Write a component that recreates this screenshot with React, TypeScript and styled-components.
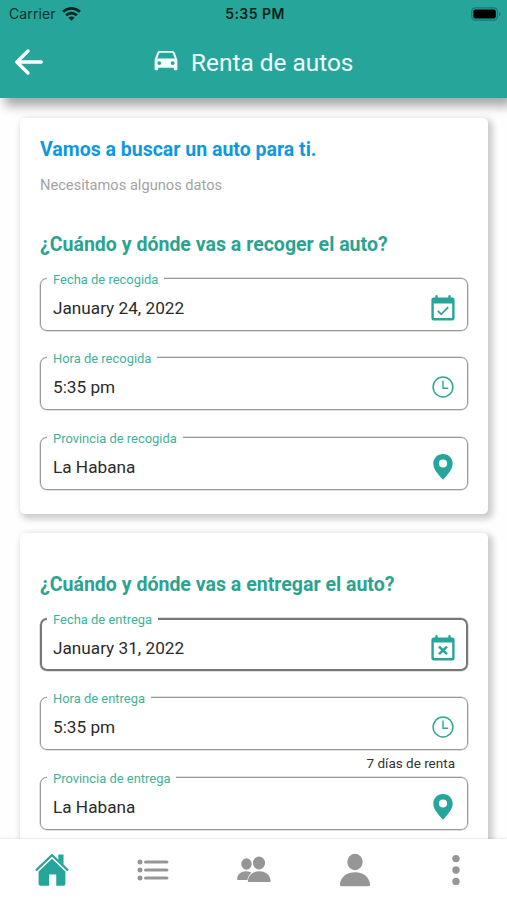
import React from "react";
import styled, { createGlobalStyle } from "styled-components";

const teal = "#26a69a";

const GlobalStyle = createGlobalStyle`
  * { box-sizing: border-box; }
  body { margin: 0; background: #fefefe; font-family: Roboto, sans-serif; }
`;

const Screen = styled.div`
  width: 507px;
  height: 900px;
  display: flex;
  flex-direction: column;
  overflow: hidden;
`;

const Header = styled.header`
  flex: none;
  height: 98px;
  background: ${teal};
  box-shadow: 5px 8px 10px rgba(0, 0, 0, 0.34);
  z-index: 1;
`;

const StatusBar = styled.div`
  height: 28px;
  padding: 0 6px 0 9px;
  display: grid;
  grid-template-columns: 1fr auto 1fr;
  align-items: center;
  font: 400 14px/28px Inter, sans-serif;
  color: #08302c;
`;

const Carrier = styled.div`
  display: flex;
  align-items: center;
  gap: 6px;
  letter-spacing: 0.1px;
`;

const Clock = styled.div`
  font-weight: 600;
  color: #061f1d;
  letter-spacing: 0.45px;
`;

const Battery = styled.div`
  display: flex;
  justify-content: flex-end;
`;

const TitleBar = styled.div`
  height: 68px;
  display: flex;
  align-items: center;
  padding-left: 14px;
`;

const Title = styled.h1`
  margin: 0 0 0 110px;
  padding-top: 2px;
  display: flex;
  align-items: center;
  gap: 13px;
  font-weight: 400;
  font-size: 24.4px;
  line-height: 30px;
  color: #effffc;
  white-space: nowrap;

  svg { margin-bottom: 5px; }
`;

const Content = styled.main`
  flex: 1;
  min-height: 0;
  overflow: hidden;
  padding: 20px 19px 0 20px;
  display: flex;
  flex-direction: column;
  gap: 19px;
`;

const Card = styled.section<{ $height: number }>`
  flex: none;
  height: ${(p) => p.$height}px;
  padding: 0 20px;
  border-radius: 5px;
  background: #fff;
  box-shadow: 3px 3px 6px 2px rgba(0, 0, 0, 0.2);
`;

const Intro = styled.div`
  height: 107px;
  padding-top: 20px;
`;

const Lead = styled.h2`
  margin: 0;
  font-size: 19.5px;
  line-height: 24px;
  font-weight: 700;
  color: #0d98df;
`;

const Hint = styled.p`
  margin: 13px 0 0;
  font-size: 14.65px;
  line-height: 20px;
  color: #a3a3a3;
`;

const Question = styled.h3<{ $top?: number }>`
  margin: 0;
  padding-top: ${(p) => p.$top ?? 0}px;
  height: ${(p) => 53 + (p.$top ?? 0)}px;
  font-size: 19.55px;
  line-height: 40px;
  font-weight: 700;
  color: #2aa390;
  white-space: nowrap;
`;

const Fields = styled.div`
  display: grid;
  grid-auto-rows: 53px;
  row-gap: 26.4px;
`;

const Slot = styled.div`
  min-width: 0;
`;

const Box = styled.div<{ $focused?: boolean }>`
  position: relative;
  height: 53px;
  display: flex;
  align-items: center;
  justify-content: space-between;
  padding: ${(p) => (p.$focused ? "6px 10px 0 11px" : "7px 11px 0 12px")};
  border: ${(p) => (p.$focused ? "2px solid #777" : "1px solid #999")};
  border-radius: 7px;
  box-shadow: 0 0 0 0.5px rgba(130, 130, 130, 0.5);
`;

const Label = styled.span<{ $focused?: boolean }>`
  position: absolute;
  left: ${(p) => (p.$focused ? 5 : 6)}px;
  top: ${(p) => (p.$focused ? -10 : -9)}px;
  padding: 1px 6px 0;
  background: #fff;
  font-size: 12.95px;
  line-height: 18px;
  color: #3cb39c;
  white-space: nowrap;
`;

const Value = styled.span`
  font-size: 17.2px;
  line-height: 24px;
  color: #2b2b2b;
`;

const FieldIcon = styled.span`
  display: grid;
  place-items: center;
  width: 26px;
  height: 28px;
`;

const Note = styled.p`
  margin: 0;
  padding: 4px 13px 0 0;
  text-align: right;
  font-size: 13.5px;
  line-height: 18px;
  color: #333;
`;

const Nav = styled.nav`
  flex: none;
  height: 61px;
  padding-left: 1px;
  display: grid;
  grid-template-columns: repeat(5, 1fr);
  background: #fff;
  box-shadow: 0 -1px 2px rgba(0, 0, 0, 0.09);
  z-index: 1;
`;

const NavItem = styled.a<{ $active?: boolean }>`
  display: grid;
  place-items: center;
  color: ${(p) => (p.$active ? teal : "#969696")};
`;

const WifiIcon = () => (
  <svg width="19" height="14" viewBox="0 0 19 14" fill="none" stroke="#062522" strokeWidth="2.8">
    <path d="M1 4.8a12.2 12.2 0 0 1 17 0" />
    <path d="M4.2 8.3a7.5 7.5 0 0 1 10.6 0" />
    <path d="M9.5 13.8 6.4 10.7a4.4 4.4 0 0 1 6.2 0Z" fill="#062522" stroke="none" />
  </svg>
);

const BatteryIcon = () => (
  <svg width="30" height="14" viewBox="0 0 30 14">
    <rect x=".8" y=".8" width="25.6" height="12.4" rx="3.6" fill="none" stroke="#1a756c" strokeWidth="1.2" />
    <rect x="2.4" y="2.4" width="22.4" height="9.2" rx="2" fill="#000" />
    <path d="M28 5v4q1.6-.6 1.6-2T28 5Z" fill="#1a756c" />
  </svg>
);

const BackIcon = () => (
  <svg width="30" height="28" viewBox="0 0 30 28" fill="none" stroke="#fff" strokeWidth="3.3" strokeLinecap="round" strokeLinejoin="round">
    <path d="M27.3 14H3M14 3 2.800 14 14 25" />
  </svg>
);

const CarIcon = () => (
  <svg width="24" height="20" viewBox="0 0 24 20" fill="#f2fffd" fillRule="evenodd">
    <path d="M5.600 0h12.800q1.800 0 2.400 1.700L23.400 9v9.200q0 1-1 1h-1.600q-1 0-1-1v-1.400H4.200v1.400q0 1-1 1H1.600q-1 0-1-1V9l2.600-7.300Q3.800 0 5.600 0ZM5.400 1.800 3.200 7.600h17.600l-2.200-5.800ZM5.300 10.200a1.900 1.900 0 1 0 0 3.800 1.900 1.900 0 0 0 0-3.800Zm13.400 0a1.900 1.900 0 1 0 0 3.800 1.900 1.900 0 0 0 0-3.800Z" />
  </svg>
);

const CalendarIcon = ({ mark }: { mark: "check" | "cross" }) => (
  <svg width="24" height="26" viewBox="0 0 24 26" fill={teal}>
    <path
      fillRule="evenodd"
      d={`M4.3 1.200q0-1.200 1.200-1.200t1.200 1.200v1.400h10.600V1.200q0-1.200 1.200-1.200t1.200 1.200v1.400h1.700q2.200 0 2.200 2.200v18.400q0 2.200-2.200 2.200H2.600Q.4 25.400.4 23.200V4.800Q.4 2.600 2.600 2.600h1.700ZM2.800 ${mark === "check" ? 8.6 : 7.6}V23h18.400V${mark === "check" ? 8.6 : 7.6}Z`}
    />
    <path
      d={mark === "check" ? "m6.800 15.800 3.400 3.500 7-7.200" : "m8 11.600 8 7.600m0-7.600-8 7.600"}
      fill="none"
      stroke={teal}
      strokeWidth={mark === "check" ? 1.8 : 2.5}
    />
  </svg>
);

const TimeIcon = () => (
  <svg width="22" height="22" viewBox="0 0 22 22" fill="none" stroke="#2ca993">
    <circle cx="11" cy="11" r="9.9" strokeWidth="1.5" />
    <path d="M11 4.600v7.600h5.200" strokeWidth="1.400" />
  </svg>
);

const PinIcon = () => (
  <svg width="20" height="26" viewBox="0 0 20 26" fill={teal} fillRule="evenodd">
    <path d="M10 0C4.500 0 .3 4.200.3 9.500c0 6 5.300 11.500 9.700 16.200 4.400-4.700 9.700-10.200 9.700-16.200C19.700 4.200 15.500 0 10 0Zm0 5.400a4 4 0 1 1 0 8.200 4 4 0 0 1 0-8.200Z" />
  </svg>
);

const HomeIcon = () => (
  <svg width="34" height="34" viewBox="0 0 36 34" preserveAspectRatio="none" fill="currentColor">
    <path d="M1.600 16.800 18 2.200l16.400 14.600" fill="none" stroke="currentColor" strokeWidth="2.300" strokeLinecap="round" strokeLinejoin="round" />
    <path d="M24.700 1.600h5.500v10.200l-5.500-4.900ZM18 5.800l14.200 12.600v12.400q0 2-2 2h-7.700V21.600h-7.600v11.200H5.800q-2 0-2-2V18.400Z" />
  </svg>
);

const ListIcon = () => (
  <svg width="32" height="22" viewBox="0 0 32 22" fill="currentColor">
    {[3, 11, 19].map((y) => (
      <g key={y}>
        <circle cx="3" cy={y} r="2.500" />
        <rect x="7" y={y - 1.6} width="24.500" height="3.200" rx="1.600" />
      </g>
    ))}
  </svg>
);

const PeopleIcon = () => (
  <svg width="36" height="28" viewBox="0 0 36 28" fill="currentColor">
    <ellipse cx="10.500" cy="8" rx="5.200" ry="5.700" />
    <path d="M1.300 24q-.8-3 1.600-6 3.500-3.700 9.300-2.600 2 .3 3.200 1.300-3.200 2.300-4 7.300Z" />
    <ellipse cx="23" cy="7" rx="6.100" ry="6.500" />
    <path d="M12.700 26q-1.100 0-.8-1.700c.8-6 5.700-9 11.300-9s10.700 3 11.400 9q.2 1.700-.9 1.700Z" />
  </svg>
);

const PersonIcon = () => (
  <svg width="32" height="34" viewBox="0 0 32 34" fill="currentColor">
    <ellipse cx="16" cy="9" rx="7.700" ry="8.300" />
    <path d="M3 33.200q-2.500 0-2.100-2.200C2 23.500 8 19.300 16 19.300S30 23.500 31.100 31q.4 2.200-2.100 2.200Z" />
  </svg>
);

const MoreIcon = () => (
  <svg width="10" height="32" viewBox="0 0 10 32" fill="currentColor">
    <circle cx="5" cy="4.600" r="3.700" />
    <circle cx="5" cy="16" r="3.700" />
    <circle cx="5" cy="27.400" r="3.700" />
  </svg>
);

type FieldProps = {
  label: string;
  value: string;
  icon: React.ReactNode;
  focused?: boolean;
  note?: string;
};

const Field = ({ label, value, icon, focused, note }: FieldProps) => (
  <Slot>
    <Box $focused={focused}>
      <Label $focused={focused}>{label}</Label>
      <Value>{value}</Value>
      <FieldIcon>{icon}</FieldIcon>
    </Box>
    {note && <Note>{note}</Note>}
  </Slot>
);

export default function App() {
  return (
    <Screen>
      <GlobalStyle />
      <Header>
        <StatusBar>
          <Carrier>
            Carrier <WifiIcon />
          </Carrier>
          <Clock>5:35 PM</Clock>
          <Battery>
            <BatteryIcon />
          </Battery>
        </StatusBar>
        <TitleBar>
          <BackIcon />
          <Title>
            <CarIcon />
            Renta de autos
          </Title>
        </TitleBar>
      </Header>
      <Content>
        <Card $height={396}>
          <Intro>
            <Lead>Vamos a buscar un auto para ti.</Lead>
            <Hint>Necesitamos algunos datos</Hint>
          </Intro>
          <Question>¿Cuándo y dónde vas a recoger el auto?</Question>
          <Fields>
            <Field label="Fecha de recogida" value="January 24, 2022" icon={<CalendarIcon mark="check" />} />
            <Field label="Hora de recogida" value="5:35 pm" icon={<TimeIcon />} />
            <Field label="Provincia de recogida" value="La Habana" icon={<PinIcon />} />
          </Fields>
        </Card>
        <Card $height={396}>
          <Question $top={32}>¿Cuándo y dónde vas a entregar el auto?</Question>
          <Fields>
            <Field label="Fecha de entrega" value="January 31, 2022" icon={<CalendarIcon mark="cross" />} focused />
            <Field label="Hora de entrega" value="5:35 pm" icon={<TimeIcon />} note="7 días de renta" />
            <Field label="Provincia de entrega" value="La Habana" icon={<PinIcon />} />
          </Fields>
        </Card>
      </Content>
      <Nav>
        <NavItem $active>
          <HomeIcon />
        </NavItem>
        <NavItem>
          <ListIcon />
        </NavItem>
        <NavItem>
          <PeopleIcon />
        </NavItem>
        <NavItem>
          <PersonIcon />
        </NavItem>
        <NavItem>
          <MoreIcon />
        </NavItem>
      </Nav>
    </Screen>
  );
}
